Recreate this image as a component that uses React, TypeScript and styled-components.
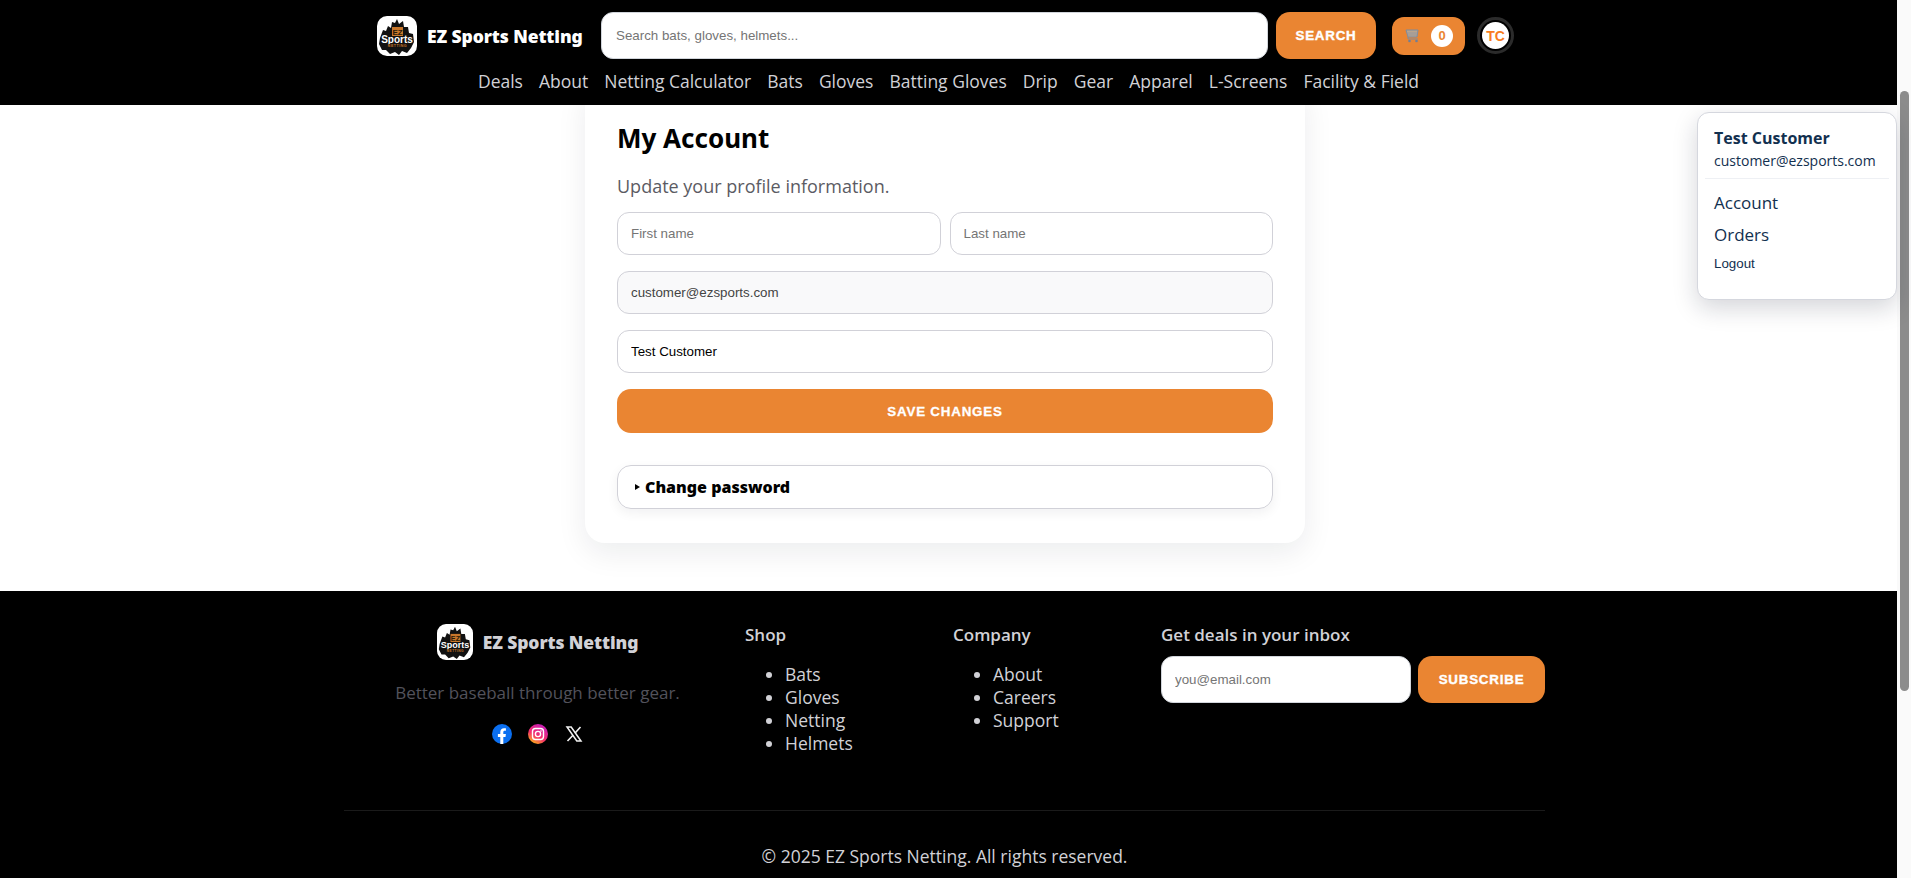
import React from "react";
import styled, { createGlobalStyle } from "styled-components";

const sans = `"Open Sans", "Noto Sans", sans-serif`;
const arial = `"Liberation Sans", Arial, sans-serif`;
const heavy = `"Noto Sans", "Open Sans", sans-serif`;
const orange = "#ea8532";

const GlobalStyle = createGlobalStyle`
  * { box-sizing: border-box; }
  html, body { margin: 0; height: 100%; overflow: hidden; background: #fff; }
  body { font-family: ${sans}; color: #000; }
  a { color: inherit; text-decoration: none; }
`;

const Shell = styled.div`
  display: flex;
  height: 878px;
  overflow: hidden;
`;

const Page = styled.div`
  flex: 1;
  min-width: 0;
  display: flex;
  flex-direction: column;
`;

const ScrollTrack = styled.div`
  width: 14px;
  background: #fafafa;
  padding: 91px 2px 0 3px;
`;

const ScrollThumb = styled.div`
  height: 600px;
  background: #8c8c8c;
  border-radius: 5px;
`;

const Header = styled.header`
  position: relative;
  z-index: 2;
  height: 105px;
  background: #000;
  padding-top: 12px;
`;

const TopRow = styled.div`
  display: flex;
  align-items: center;
  height: 47px;
  margin-left: 377px;
`;

const Brand = styled.a`
  display: flex;
  align-items: center;
  gap: 10px;
  width: 224px;
`;

const BrandName = styled.span<{ $muted?: boolean }>`
  font-family: ${heavy};
  font-weight: 900;
  font-size: 17.5px;
  letter-spacing: -0.1px;
  white-space: nowrap;
  color: ${(p) => (p.$muted ? "#d1d1d6" : "#fff")};
`;

const SearchInput = styled.input`
  width: 667px;
  height: 47px;
  border: 1px solid #d1d5db;
  border-radius: 12px;
  padding: 0 14px;
  font-family: ${arial};
  font-size: 13.33px;
  background: #fff;
  margin-right: 8px;
  &::placeholder { color: #757575; }
`;

const ActionButton = styled.button<{ $width: string }>`
  width: ${(p) => p.$width};
  height: 47px;
  border: none;
  border-radius: 14px;
  background: ${orange};
  color: #fff;
  font-family: ${arial};
  font-weight: 900;
  font-size: 13.33px;
  letter-spacing: 0.8px;
  -webkit-text-stroke: 0.4px #fff;
  text-transform: uppercase;
`;

const CartButton = styled.div`
  display: flex;
  align-items: center;
  gap: 11px;
  width: 73px;
  height: 38px;
  margin-left: 16px;
  padding-left: 13px;
  background: ${orange};
  border-radius: 12px;
`;

const CartCount = styled.span`
  width: 22px;
  height: 22px;
  border-radius: 50%;
  background: #fff;
  color: ${orange};
  font-family: ${arial};
  font-weight: 700;
  font-size: 13px;
  display: flex;
  align-items: center;
  justify-content: center;
`;

const Avatar = styled.div`
  width: 37px;
  height: 37px;
  margin-left: 12px;
  border-radius: 50%;
  border: 3px solid #2b2b2b;
  padding: 2px;
  background: #000;
`;

const AvatarInner = styled.div`
  width: 100%;
  height: 100%;
  border-radius: 50%;
  background: #fff;
  color: #f97c1e;
  font-family: ${arial};
  font-weight: 700;
  font-size: 14px;
  display: flex;
  align-items: center;
  justify-content: center;
`;

const Nav = styled.nav`
  display: flex;
  justify-content: center;
  gap: 16px;
  margin-top: 10px;
  padding-right: 0;
`;

const NavLink = styled.a`
  font-size: 17.5px;
  line-height: 24px;
  color: #d1d1d6;
  white-space: nowrap;
`;

const Main = styled.main`
  height: 486px;
`;

const Card = styled.section`
  width: 720px;
  height: 462px;
  margin: -24px 0 0 585px;
  padding: 0 32px;
  background: #fff;
  border-radius: 20px;
  box-shadow: 0 10px 30px rgba(15, 23, 42, 0.08);
  display: flex;
  flex-direction: column;
`;

const Title = styled.h1`
  margin: 39px 0 0;
  font-family: ${heavy};
  font-weight: 700;
  font-size: 26px;
  line-height: 36px;
`;

const Lead = styled.p`
  margin: 18px 0 13px;
  font-size: 18px;
  line-height: 25px;
  color: #5b5b63;
`;

const NameRow = styled.div`
  display: grid;
  grid-template-columns: 1fr 1fr;
  gap: 9px;
  margin-bottom: 16px;
`;

const Field = styled.input<{ $disabled?: boolean }>`
  width: 100%;
  height: 43px;
  border: 1px solid #d1d1d8;
  border-radius: 12px;
  padding: 0 13px;
  font-family: ${arial};
  font-size: 13.33px;
  color: ${(p) => (p.$disabled ? "#444" : "#000")};
  background: ${(p) => (p.$disabled ? "#f9f9fa" : "#fff")};
  margin-bottom: ${(p) => (p.$disabled ? "16px" : "0")};
  &::placeholder { color: #757575; }
`;

const SaveButton = styled.button`
  height: 44px;
  margin-top: 16px;
  border: none;
  border-radius: 14px;
  background: ${orange};
  color: #fff;
  font-family: ${arial};
  font-weight: 700;
  font-size: 13.33px;
  letter-spacing: 0.8px;
  -webkit-text-stroke: 0.3px #fff;
  text-transform: uppercase;
`;

const Details = styled.div`
  display: flex;
  align-items: center;
  gap: 5px;
  height: 44px;
  margin-top: 32px;
  padding-left: 17px;
  border: 1px solid #d1d1d8;
  border-radius: 14px;
  box-shadow: 0 4px 12px rgba(15, 23, 42, 0.06);
  font-family: ${heavy};
  font-weight: 900;
  font-size: 16px;
`;

const Marker = styled.span`
  width: 0;
  height: 0;
  border-left: 5px solid #000;
  border-top: 3px solid transparent;
  border-bottom: 3px solid transparent;
`;

const Menu = styled.div`
  position: absolute;
  z-index: 3;
  top: 112px;
  right: 14px;
  width: 200px;
  height: 188px;
  padding: 14px 16px;
  background: #fff;
  border: 1px solid #d5d7de;
  border-radius: 12px;
  box-shadow: 0 8px 24px rgba(15, 23, 42, 0.18);
  color: #12304f;
`;

const MenuName = styled.div`
  font-weight: 700;
  font-size: 16px;
  line-height: 22px;
`;

const MenuEmail = styled.div`
  font-size: 14px;
  line-height: 20px;
  padding-bottom: 7px;
  margin: 2px -9px 0;
  padding-left: 9px;
  border-bottom: 1px solid #eef0f4;
`;

const MenuLink = styled.a`
  display: block;
  font-size: 17px;
  line-height: 24px;
  margin-top: 8px;
  &:first-of-type { margin-top: 12px; }
`;

const MenuLogout = styled.a`
  display: block;
  margin-top: 9px;
  font-family: ${arial};
  font-size: 13.33px;
  line-height: 16px;
`;

const Footer = styled.footer`
  flex: 1;
  background: #000;
  padding: 32px 0 0 344px;
  color: #d1d1d6;
`;

const FooterGrid = styled.div`
  display: flex;
  width: 1201px;
  height: 187px;
`;

const FooterBrand = styled.div`
  width: 401px;
  padding-top: 1px;
  display: flex;
  flex-direction: column;
  align-items: center;
  padding-right: 14px;
`;

const FooterBrandRow = styled.div`
  display: flex;
  align-items: center;
  gap: 10px;
  height: 36px;
`;

const Tagline = styled.p`
  margin: 21px 0 0;
  font-size: 17px;
  line-height: 24px;
  color: #52525b;
`;

const Socials = styled.div`
  display: flex;
  gap: 16px;
  margin-top: 19px;
`;

const FooterColumn = styled.div`
  width: 208px;
`;

const FooterHeading = styled.h4`
  margin: 0;
  font-weight: 600;
  font-size: 17px;
  line-height: 24px;
`;

const FooterList = styled.ul`
  margin: 16px 0 0;
  padding: 0 0 0 40px;
  font-size: 17.5px;
  line-height: 23px;
`;

const Subscribe = styled.div`
  display: flex;
  gap: 7px;
  margin-top: 9px;
`;

const SubscribeInput = styled.input`
  width: 250px;
  height: 47px;
  border: 1px solid #d1d5db;
  border-radius: 12px;
  padding: 0 13px;
  font-family: ${arial};
  font-size: 13.33px;
  &::placeholder { color: #757575; }
`;

const Rule = styled.div`
  width: 1201px;
  border-top: 1px solid #1a1a1a;
`;

const Copyright = styled.p`
  width: 1201px;
  margin: 33px 0 0;
  text-align: center;
  font-size: 17.5px;
  line-height: 24px;
`;

const LogoMark = ({ size }: { size: number }) => (
  <svg width={size} height={size} viewBox="0 0 40 40">
    <rect width="40" height="40" rx="10" fill="#fff" />
    <path
      d="M3 22l3-8 3 1 2-5 3 2 1-6 3 1 2-4 2 5 4-3 1 6 4 0 1 6 4 1 1 8-3 6-4 5-5-2-3 4-4-3-5 2-4-4-4 0-3-6z"
      fill="#111"
    />
    <rect x="15" y="11" width="11" height="9" fill="#c9772b" />
    <text x="20.5" y="18.5" textAnchor="middle" fontSize="8" fontWeight="900" fontFamily="Liberation Sans" fill="#2a1a08">
      EZ
    </text>
    <text x="20" y="26.5" textAnchor="middle" fontSize="10" fontWeight="900" fontFamily="Liberation Sans" fill="#fff">
      Sports
    </text>
    <rect x="9" y="28" width="23" height="4" fill="#111" />
    <text x="20.5" y="31.3" textAnchor="middle" fontSize="3.6" fontWeight="700" fontFamily="Liberation Sans" fill="#c9772b" letterSpacing="0.5">
      NETTING
    </text>
  </svg>
);

const CartIcon = () => (
  <svg width="15" height="15" viewBox="0 0 15 15" fill="none">
    <path d="M1 2h12l-1 7H3z" fill="#b9a58f" stroke="#7d8ba0" strokeWidth="1" />
    <path d="M2 5h11M2.500 7h10" stroke="#8e96a3" strokeWidth="0.8" />
    <path d="M3 9v2h10" stroke="#7d8ba0" strokeWidth="1" />
    <circle cx="4.500" cy="13" r="1.300" fill="#6f7f98" />
    <circle cx="11.500" cy="13" r="1.300" fill="#6f7f98" />
  </svg>
);

const FacebookIcon = () => (
  <svg width="20" height="20" viewBox="0 0 20 20">
    <circle cx="10" cy="10" r="10" fill="#0b6ff0" />
    <path d="M8.300 20v-7H5.900v-3h2.400V8c0-2.500 1.500-3.800 3.700-3.800 1 0 1.900.15 1.900.15v2.500h-1.100c-1.200 0-1.500.7-1.500 1.500V10h2.600l-.4 3h-2.200v7z" fill="#fff" />
  </svg>
);

const InstagramIcon = () => (
  <svg width="20" height="20" viewBox="0 0 20 20">
    <defs>
      <linearGradient id="ig" x1="0.2" y1="1" x2="0.8" y2="0">
        <stop offset="0" stopColor="#fdc010" />
        <stop offset="0.4" stopColor="#f5306a" />
        <stop offset="1" stopColor="#c21bc0" />
      </linearGradient>
    </defs>
    <circle cx="10" cy="10" r="10" fill="url(#ig)" />
    <rect x="4.500" y="4.500" width="11" height="11" rx="3" fill="none" stroke="#fff" strokeWidth="1.400" />
    <circle cx="10" cy="10" r="2.600" fill="none" stroke="#fff" strokeWidth="1.400" />
    <circle cx="13" cy="7" r="0.800" fill="#fff" />
  </svg>
);

const XIcon = () => (
  <svg width="20" height="20" viewBox="0 0 20 20">
    <path d="M3 3h4.200l9.800 14h-4.200z" fill="none" stroke="#f2f2f2" strokeWidth="1.500" />
    <path d="M16.500 3l-5.600 6.200M9 11.200L3.500 17" stroke="#f2f2f2" strokeWidth="1.600" />
  </svg>
);

const navItems = ["Deals", "About", "Netting Calculator", "Bats", "Gloves", "Batting Gloves", "Drip", "Gear", "Apparel", "L-Screens", "Facility & Field"];
const shopItems = ["Bats", "Gloves", "Netting", "Helmets"];
const companyItems = ["About", "Careers", "Support"];

const App = () => {
  return (
    <Shell>
      <GlobalStyle />
      <Page>
        <Header>
          <TopRow>
            <Brand>
              <LogoMark size={40} />
              <BrandName>EZ Sports Netting</BrandName>
            </Brand>
            <SearchInput placeholder="Search bats, gloves, helmets..." />
            <ActionButton $width="100px">Search</ActionButton>
            <CartButton>
              <CartIcon />
              <CartCount>0</CartCount>
            </CartButton>
            <Avatar>
              <AvatarInner>TC</AvatarInner>
            </Avatar>
          </TopRow>
          <Nav>
            {navItems.map((item) => (
              <NavLink key={item}>{item}</NavLink>
            ))}
          </Nav>
        </Header>
        <Main>
          <Card>
            <Title>My Account</Title>
            <Lead>Update your profile information.</Lead>
            <NameRow>
              <Field placeholder="First name" />
              <Field placeholder="Last name" />
            </NameRow>
            <Field $disabled readOnly value="customer@ezsports.com" />
            <Field readOnly value="Test Customer" />
            <SaveButton>Save changes</SaveButton>
            <Details>
              <Marker />
              Change password
            </Details>
          </Card>
        </Main>
        <Footer>
          <FooterGrid>
            <FooterBrand>
              <FooterBrandRow>
                <LogoMark size={36} />
                <BrandName $muted>EZ Sports Netting</BrandName>
              </FooterBrandRow>
              <Tagline>Better baseball through better gear.</Tagline>
              <Socials>
                <FacebookIcon />
                <InstagramIcon />
                <XIcon />
              </Socials>
            </FooterBrand>
            <FooterColumn>
              <FooterHeading>Shop</FooterHeading>
              <FooterList>
                {shopItems.map((item) => (
                  <li key={item}>{item}</li>
                ))}
              </FooterList>
            </FooterColumn>
            <FooterColumn>
              <FooterHeading>Company</FooterHeading>
              <FooterList>
                {companyItems.map((item) => (
                  <li key={item}>{item}</li>
                ))}
              </FooterList>
            </FooterColumn>
            <div>
              <FooterHeading>Get deals in your inbox</FooterHeading>
              <Subscribe>
                <SubscribeInput placeholder="you@email.com" />
                <ActionButton $width="127px">Subscribe</ActionButton>
              </Subscribe>
            </div>
          </FooterGrid>
          <Rule />
          <Copyright>© 2025 EZ Sports Netting. All rights reserved.</Copyright>
        </Footer>
      </Page>
      <ScrollTrack>
        <ScrollThumb />
      </ScrollTrack>
      <Menu>
        <MenuName>Test Customer</MenuName>
        <MenuEmail>customer@ezsports.com</MenuEmail>
        <MenuLink>Account</MenuLink>
        <MenuLink>Orders</MenuLink>
        <MenuLogout>Logout</MenuLogout>
      </Menu>
    </Shell>
  );
};

export default App;
